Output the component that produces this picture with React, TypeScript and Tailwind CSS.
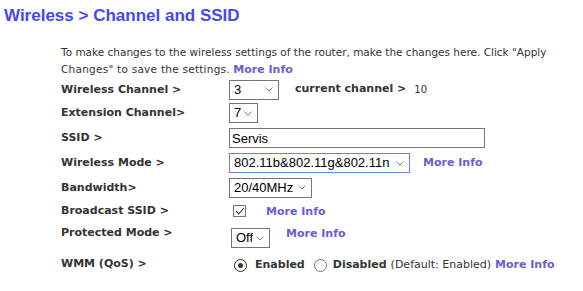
import { type ReactNode } from "react";

const labelFont = "font-['DejaVu_Sans',Verdana,sans-serif]";
const fieldFont = "font-['Liberation_Sans',Arial,sans-serif]";

function MoreInfo({ className = "" }: { className?: string }) {
  return (
    <a
      href="#"
      className={`${labelFont} text-[11px] font-bold text-[#6b5dd3] no-underline ${className}`}
    >
      More Info
    </a>
  );
}

function Chevron() {
  return (
    <svg width="8" height="5" viewBox="0 0 8 5" className="shrink-0" aria-hidden>
      <path d="M0.5 0.5 L4 4 L7.5 0.5" fill="none" stroke="#808080" strokeWidth="1" />
    </svg>
  );
}

type SelectProps = {
  value: string;
  options: string[];
  width: string;
  focused?: boolean;
};

function Select({ value, options, width, focused }: SelectProps) {
  return (
    <div
      className={`flex h-5 items-center gap-[3px] border bg-white pl-[4px] pr-[5px] ${width} ${
        focused ? "border-[#5b87e0]" : "border-[#767676]"
      }`}
    >
      <select
        defaultValue={value}
        className={`${fieldFont} min-w-0 flex-1 appearance-none bg-transparent text-[13px] leading-4 text-black outline-none`}
      >
        {options.map((option) => (
          <option key={option}>{option}</option>
        ))}
      </select>
      <Chevron />
    </div>
  );
}

function Radio({ checked }: { checked?: boolean }) {
  return (
    <span
      className={`flex h-[13px] w-[13px] shrink-0 items-center justify-center rounded-full border bg-white ${
        checked ? "border-[#333]" : "border-[#767676]"
      }`}
    >
      {checked && <span className="h-[5px] w-[5px] rounded-full bg-[#333]" />}
    </span>
  );
}

type RowProps = {
  label: string;
  height: string;
  children: ReactNode;
  align?: string;
};

function Row({ label, height, children, align = "items-center" }: RowProps) {
  return (
    <div className={`flex ${align} ${height}`}>
      <div className={`${labelFont} w-[168px] shrink-0 text-[11px] font-bold leading-[14px] text-[#333]`}>
        {label}
      </div>
      <div className="flex items-center">{children}</div>
    </div>
  );
}

export default function App() {
  return (
    <div className="h-[291px] w-[583px] overflow-hidden bg-white">
      <h1 className="pl-1 pt-[6px] font-['Liberation_Sans',Arial,sans-serif] text-[17px] font-bold leading-5 text-[#4747f2]">
        Wireless &gt; Channel and SSID
      </h1>

      <div className="ml-[61px] mt-[18px]">
        <p className={`${labelFont} whitespace-nowrap text-[10.5px] leading-[17px] text-[#333]`}>
          To make changes to the wireless settings of the router, make the changes here. Click "Apply
          <br />
          <span className="tracking-[0.25px]">Changes" to save the settings.</span> <MoreInfo />
        </p>

        <Row label="Wireless Channel >" height="h-[23px]">
          <Select value="3" options={["1", "2", "3", "4", "5", "6", "7", "8", "9", "10", "11"]} width="w-[50px]" />
          <span className={`${labelFont} ml-4 text-[11px] font-bold text-[#333]`}>current channel &gt;</span>
          <span className={`${labelFont} ml-2 text-[10px] text-[#333]`}>10</span>
        </Row>

        <Row label="Extension Channel>" height="h-[24px]">
          <Select value="7" options={["7"]} width="w-[29px]" />
        </Row>

        <Row label="SSID >" height="h-[26px]">
          <input
            defaultValue="Servis"
            className={`${fieldFont} h-5 w-[256px] border border-[#767676] px-[2px] text-[13px] text-black outline-none`}
          />
        </Row>

        <Row label="Wireless Mode >" height="h-[24px]">
          <Select
            value="802.11b&802.11g&802.11n"
            options={["802.11b&802.11g&802.11n", "802.11b&802.11g", "802.11n"]}
            width="w-[181px]"
            focused
          />
          <MoreInfo className="ml-[13px]" />
        </Row>

        <Row label="Bandwidth>" height="h-[25px]">
          <Select value="20/40MHz" options={["20MHz", "20/40MHz"]} width="w-[83px]" />
        </Row>

        <Row label="Broadcast SSID >" height="h-[22px]">
          <span className="ml-1 flex h-[12px] w-[13px] items-center justify-center border border-[#767676] bg-white">
            <svg width="10" height="8" viewBox="0 0 10 8" aria-hidden>
              <path d="M1 4 L3.8 6.8 L9 1" fill="none" stroke="#333" strokeWidth="1.1" />
            </svg>
          </span>
          <MoreInfo className="ml-5 mt-[3px]" />
        </Row>

        <Row label="Protected Mode >" height="h-[30px]" align="items-start pt-[4px]">
          <div className="ml-[2px] mt-[2px]">
            <Select value="Off" options={["Off", "On"]} width="w-[39px]" />
          </div>
          <MoreInfo className="ml-4 self-start" />
        </Row>

        <Row label="WMM (QoS) >" height="h-[24px]">
          <div className={`${labelFont} mt-[3px] flex items-center text-[11px] text-[#333]`}>
            <span className="ml-[5px]">
              <Radio checked />
            </span>
            <span className="ml-2 font-bold">Enabled</span>
            <span className="ml-[9px]">
              <Radio />
            </span>
            <span className="ml-[6px] font-bold">Disabled</span>
            <span className="ml-1">(Default: Enabled)</span>
            <MoreInfo className="ml-1" />
          </div>
        </Row>
      </div>
    </div>
  );
}
